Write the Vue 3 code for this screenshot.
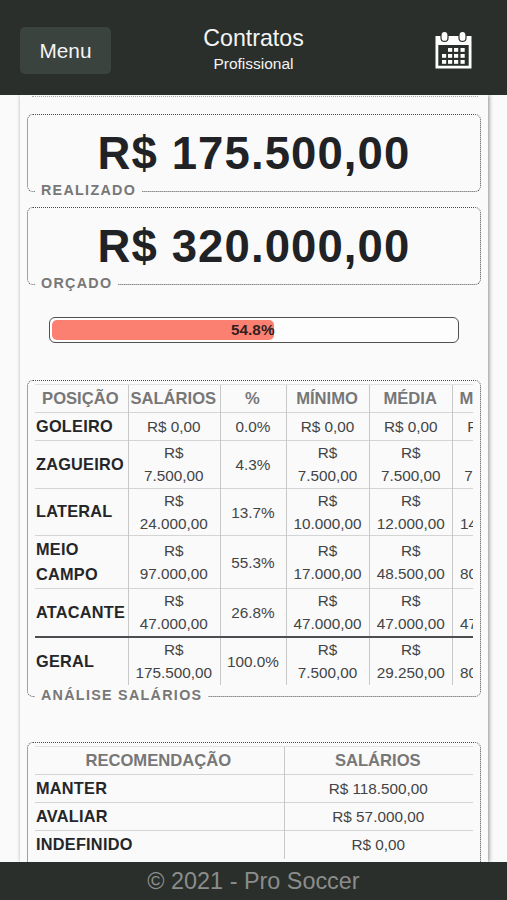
<script setup>
import {ref, computed} from "vue";

const columns = ["POSIÇÃO", "SALÁRIOS", "%", "MÍNIMO", "MÉDIA", "MÁXIMO"]

const salaries = ref([
  {name: "GOLEIRO", values: ["R$ 0,00", "0.0%", "R$ 0,00", "R$ 0,00", "R$ 0,00"]},
  {name: "ZAGUEIRO", values: ["R$ 7.500,00", "4.3%", "R$ 7.500,00", "R$ 7.500,00", "R$ 7.500,00"]},
  {name: "LATERAL", values: ["R$ 24.000,00", "13.7%", "R$ 10.000,00", "R$ 12.000,00", "R$ 14.000,00"]},
  {name: "MEIO CAMPO", values: ["R$ 97.000,00", "55.3%", "R$ 17.000,00", "R$ 48.500,00", "R$ 80.000,00"]},
  {name: "ATACANTE", values: ["R$ 47.000,00", "26.8%", "R$ 47.000,00", "R$ 47.000,00", "R$ 47.000,00"]},
  {name: "GERAL", values: ["R$ 175.500,00", "100.0%", "R$ 7.500,00", "R$ 29.250,00", "R$ 80.000,00"]},
])

const recommendations = ref([
  {name: "MANTER", value: "R$ 118.500,00"},
  {name: "AVALIAR", value: "R$ 57.000,00"},
  {name: "INDEFINIDO", value: "R$ 0,00"},
])

const spent = ref(175500)
const budget = ref(320000)

const percent = computed(() => (spent.value / budget.value * 100).toFixed(1) + "%")

const money = (value) => {
  return "R$ " + String(value).replace(/\B(?=(\d{3})+$)/g, ".") + ",00"
}

// the day squares of the calendar icon
const days = [[13, 17], [19, 17], [25.5, 17], [7, 23], [13, 23], [19, 23], [25.5, 23], [7, 29], [13, 29], [19, 29], [25.5, 29]]
</script>

<template>
  <div class="app">
    <header class="header">
      <button class="menu">Menu</button>
      <div class="title">
        <h1>Contratos</h1>
        <p>Profissional</p>
      </div>
      <svg class="calendar" viewBox="0 0 37 38" width="37" height="38">
        <path fill="#fff" fill-rule="evenodd" d="M.5 5H36.5V37.5H.5ZM3.3 14V34.7H33.7V14Z"/>
        <rect x="6" y=".4" width="7" height="10" rx="3.5" fill="#fff" stroke="#2a2f2b" stroke-width="1.2"/>
        <rect x="24" y=".4" width="7" height="10" rx="3.5" fill="#fff" stroke="#2a2f2b" stroke-width="1.2"/>
        <rect v-for="(d, i) in days" :key="i" :x="d[0]" :y="d[1]" width="4.2" height="3.8" fill="#fff"/>
      </svg>
    </header>

    <main class="page">
      <div class="previous"></div>

      <section class="box total">
        <strong>{{ money(spent) }}</strong>
        <span class="legend">REALIZADO</span>
      </section>
      <section class="box total">
        <strong>{{ money(budget) }}</strong>
        <span class="legend">ORÇADO</span>
      </section>

      <div class="progress">
        <div class="bar" :style="{width: percent}">{{ percent }}</div>
      </div>

      <section class="box analysis">
        <div class="scroll">
          <table class="salaries">
            <colgroup>
              <col class="c1"><col class="c2"><col class="c3"><col class="c4"><col class="c4"><col class="c4">
            </colgroup>
            <thead>
              <tr><th v-for="c in columns" :key="c">{{ c }}</th></tr>
            </thead>
            <tbody>
              <tr v-for="row in salaries" :key="row.name">
                <th>{{ row.name }}</th>
                <td v-for="(v, i) in row.values" :key="i">{{ v }}</td>
              </tr>
            </tbody>
          </table>
        </div>
        <span class="legend">ANÁLISE SALÁRIOS</span>
      </section>

      <section class="box advice">
        <table>
          <colgroup>
            <col class="a1"><col>
          </colgroup>
          <thead>
            <tr><th>RECOMENDAÇÃO</th><th>SALÁRIOS</th></tr>
          </thead>
          <tbody>
            <tr v-for="row in recommendations" :key="row.name">
              <th>{{ row.name }}</th>
              <td>{{ row.value }}</td>
            </tr>
          </tbody>
        </table>
      </section>
    </main>

    <footer class="footer">© 2021 - Pro Soccer</footer>
  </div>
</template>

<style>
body {
  background: #fafafa;
}
</style>

<style scoped>
* {
  box-sizing: border-box;
}

.app {
  height: 900px;
  display: flex;
  flex-direction: column;
  overflow: hidden;
  background: #fafafa;
  font-family: "Liberation Sans", Arial, sans-serif;
}

.header {
  position: relative;
  z-index: 1;
  flex: none;
  height: 95px;
  padding: 5px 35px 0 20px;
  display: grid;
  grid-template-columns: 91px 1fr 37px;
  align-items: center;
  background: #2a2f2b;
  color: #f4f4f4;
}

.menu {
  height: 47px;
  padding: 1px 0 0;
  border: 0;
  border-radius: 5px;
  background: #3b433f;
  color: #f4f4f4;
  font: 20.8px "Liberation Sans", Arial, sans-serif;
}

.title {
  padding-right: 39px;
  text-align: center;
}

.title h1 {
  margin: 0;
  font-size: 23.2px;
  font-weight: 400;
  line-height: 28px;
}

.title p {
  margin: 0;
  font-size: 15.5px;
  line-height: 24px;
}

.page {
  flex: 1;
  min-height: 0;
  overflow: hidden;
  margin: 0 19px 0 20px;
  padding: 0 7px;
  background: #fafafa;
  box-shadow: 1px 0 4px 0 #888;
}

.previous {
  height: 2px;
  margin: 0 3px 17px 5px;
  border-bottom: 1px dotted #aaa;
}

.box {
  position: relative;
  border: 1px dotted #4a4a4a;
  border-radius: 6px;
}

.legend {
  position: absolute;
  left: 7px;
  bottom: -8px;
  padding: 0 6px;
  background: #fafafa;
  color: #777;
  font-size: 14.3px;
  font-weight: 700;
  letter-spacing: 1.3px;
  line-height: 18px;
}

.total {
  height: 78px;
  margin-bottom: 15px;
  text-align: center;
}

.total strong {
  display: block;
  color: #202225;
  font-size: 45.5px;
  letter-spacing: 1.1px;
  line-height: 77px;
}

.progress {
  height: 26px;
  margin: 32px 22px 37px;
  padding: 2px 0 2px 2px;
  border: 1px solid #505050;
  border-radius: 6px;
  background: #fdfdfd;
}

.bar {
  height: 100%;
  border-radius: 5px;
  background: #fc8072;
  color: #33201f;
  font-size: 15.3px;
  font-weight: 700;
  line-height: 20px;
  text-align: right;
}

.analysis {
  height: 317px;
  padding: 3px 7px 0;
  margin-bottom: 45px;
}

.scroll {
  overflow: hidden;
}

table {
  width: 100%;
  table-layout: fixed;
  border-collapse: collapse;
  color: #424446;
  font-size: 15.3px;
  line-height: 23px;
}

.salaries {
  width: 501px;
}

.c1 {
  width: 93px;
}

.c2 {
  width: 92px;
}

.c3 {
  width: 66px;
}

.c4 {
  width: 83px;
}

.a1 {
  width: 249px;
}

tr {
  height: 28px;
}

.salaries tbody tr:nth-child(n + 2) {
  height: 48px;
}

.salaries tbody tr:nth-child(3) {
  height: 47px;
}

.salaries tbody tr:nth-child(4) {
  height: 53px;
}

.salaries tbody tr:last-child > * {
  border-top: 2px solid #4b4d50;
}

th, td {
  padding: 0 1px 1px 0;
  border-top: 1px solid #d4d4d4;
  border-left: 1px solid #c8c8c8;
  text-align: center;
  vertical-align: middle;
}

th:first-child {
  border-left: 0;
}

/* the amount drops below the currency sign in the narrow columns */
.salaries td {
  padding: 0 5px 0 4px;
}

.salaries tbody tr:nth-child(2) td {
  padding-bottom: 1px;
}

.salaries tbody tr:last-child th {
  padding-bottom: 0;
}

thead th {
  color: #777;
  font-size: 16.6px;
}

thead tr th {
  padding-right: 2px;
  border-top-color: #e2e2e2;
}

tbody th {
  padding-left: 1px;
  color: #242629;
  font-size: 16.3px;
  letter-spacing: .25px;
  line-height: 24.5px;
  text-align: left;
}

.advice {
  height: 160px;
  padding: 3px 7px 0;
}

.footer {
  flex: none;
  height: 38px;
  background: #2a2f2b;
  color: #8a8d8b;
  font-size: 23.4px;
  line-height: 38px;
  text-align: center;
}
</style>
